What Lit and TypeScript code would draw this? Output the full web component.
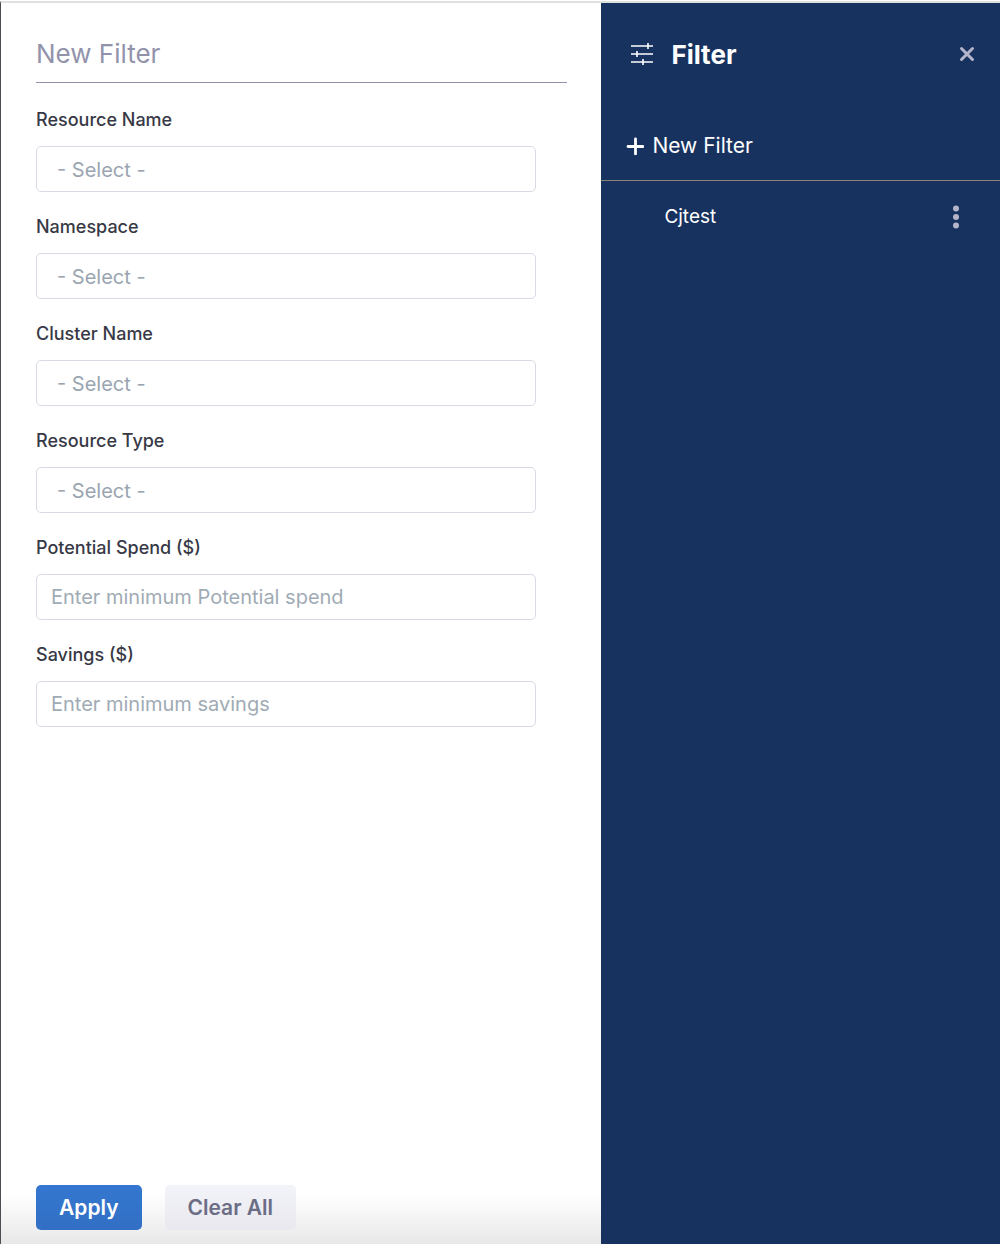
import { LitElement, html, css } from "lit";
import { customElement, state } from "lit/decorators.js";

interface Field {
  id: string;
  label: string;
  kind: "select" | "number";
  hint: string;
}

const FIELDS: Field[] = [
  { id: "resource-name", label: "Resource Name", kind: "select", hint: "- Select -" },
  { id: "namespace", label: "Namespace", kind: "select", hint: "- Select -" },
  { id: "cluster-name", label: "Cluster Name", kind: "select", hint: "- Select -" },
  { id: "resource-type", label: "Resource Type", kind: "select", hint: "- Select -" },
  { id: "potential-spend", label: "Potential Spend ($)", kind: "number", hint: "Enter minimum Potential spend" },
  { id: "savings", label: "Savings ($)", kind: "number", hint: "Enter minimum savings" },
];

@customElement("filter-form")
export class FilterForm extends LitElement {
  static styles = css`
    :host {
      display: block;
      min-width: 0;
    }
    .form {
      box-sizing: border-box;
      min-height: 100%;
      display: flex;
      flex-direction: column;
      padding: 27px 34px 14px 35px;
      background: linear-gradient(to top, #e8e8e8, #fff 50px);
    }
    input,
    select,
    button {
      box-sizing: border-box;
      margin: 0;
      font-family: inherit;
      border-radius: 5px;
    }
    .title {
      width: 100%;
      height: 53px;
      padding: 0 0 6px;
      border: 0;
      border-bottom: 1px solid #9090ae;
      border-radius: 0;
      background: none;
      color: #383946;
      font-size: 26px;
      outline: none;
    }
    .title::placeholder {
      color: #9293ab;
      opacity: 1;
    }
    .fields {
      display: grid;
      gap: 23px;
      padding: 25px 31px 25px 0;
    }
    .field {
      display: grid;
      gap: 14px;
    }
    .label {
      color: #383946;
      font-size: 18px;
      font-weight: 500;
      line-height: 24px;
    }
    .control {
      width: 100%;
      height: 46px;
      border: 1px solid #d9dae5;
      background: #fff;
      color: #9aa5b1;
      font-size: 20px;
    }
    .text {
      padding: 0 14px;
    }
    .text::placeholder {
      color: #9fabb5;
      opacity: 1;
    }
    .select {
      appearance: none;
      padding: 2px 20px 0;
    }
    .actions {
      display: flex;
      gap: 23px;
      margin-top: auto;
    }
    .button {
      height: 45px;
      padding: 0 23px;
      border: 0;
      font-size: 21px;
      font-weight: 600;
      cursor: pointer;
    }
    .apply {
      background: linear-gradient(#3477d0, #326fc4);
      color: #fff;
    }
    .clear {
      background: linear-gradient(#f3f3fa, #e9e8ef);
      color: #6b6d85;
    }
  `;

  private clear() {
    this.renderRoot.querySelector("form")?.reset();
  }

  private renderControl(f: Field) {
    return f.kind === "select"
      ? html`<select class="control select" id=${f.id}>
          <option value="">${f.hint}</option>
        </select>`
      : html`<input class="control text" id=${f.id} type="text" inputmode="decimal" placeholder=${f.hint} />`;
  }

  render() {
    return html`
      <form class="form" @submit=${(e: Event) => e.preventDefault()}>
        <input class="title" type="text" aria-label="Filter name" placeholder="New Filter" />
        <div class="fields">
          ${FIELDS.map(
            (f) => html`<div class="field">
              <label class="label" for=${f.id}>${f.label}</label>
              ${this.renderControl(f)}
            </div>`
          )}
        </div>
        <div class="actions">
          <button class="button apply" type="submit">Apply</button>
          <button class="button clear" type="button" @click=${this.clear}>Clear All</button>
        </div>
      </form>
    `;
  }
}

@customElement("filter-list")
export class FilterList extends LitElement {
  static styles = css`
    :host {
      display: block;
      min-width: 0;
      background: #18325f;
      color: #fff;
    }
    .header {
      display: flex;
      align-items: center;
      gap: 17px;
      padding: 31px 24px 0 29px;
    }
    .heading {
      flex: 1;
      margin: 0;
      padding-top: 2px;
      font-size: 26px;
      font-weight: 700;
      line-height: 38px;
    }
    svg {
      display: block;
    }
    button {
      margin: 0;
      padding: 0;
      border: 0;
      background: none;
      color: inherit;
      font-family: inherit;
      cursor: pointer;
    }
    .muted {
      color: #b4b5ca;
    }
    .add {
      display: flex;
      align-items: center;
      gap: 8px;
      box-sizing: border-box;
      width: 100%;
      padding: 57px 25px 19px;
      border-bottom: 1px solid #8a8478;
      font-size: 21px;
      line-height: 30px;
    }
    .list {
      margin: 0;
      padding: 20px 35px 0 63px;
      list-style: none;
    }
    .item {
      display: flex;
      align-items: center;
      justify-content: space-between;
    }
    .name {
      font-size: 19px;
      line-height: 32px;
    }
  `;

  @state() private filters = ["Cjtest"];

  render() {
    return html`
      <header class="header">
        <svg width="24" height="24" viewBox="0 0 24 24" fill="none" stroke="#fff" aria-hidden="true">
          <path stroke-width="1.3" d="M1 4h22M1 12h22M1 20h22" />
          <path stroke-width="1.6" d="M18 1v6M7 9v6M13 17v6" />
        </svg>
        <h2 class="heading">Filter</h2>
        <button class="muted" type="button" aria-label="Close">
          <svg width="18" height="18" viewBox="0 0 18 18" fill="none" stroke="currentColor" stroke-width="3" stroke-linecap="round">
            <path d="M3.5 3.5l11 11M14.5 3.5l-11 11" />
          </svg>
        </button>
      </header>
      <button class="add" type="button">
        <svg width="18" height="18" viewBox="0 0 18 18" fill="none" stroke="#fff" stroke-width="2.8" stroke-linecap="round" aria-hidden="true">
          <path d="M9.5 2v15M2 9.5h15" />
        </svg>
        New Filter
      </button>
      <ul class="list">
        ${this.filters.map(
          (name) => html`<li class="item">
            <button class="name" type="button">${name}</button>
            <button class="muted" type="button" aria-label="Options for ${name}">
              <svg width="18" height="24" viewBox="0 0 18 24" fill="currentColor">
                <circle cx="9" cy="3.5" r="3" />
                <circle cx="9" cy="12" r="3" />
                <circle cx="9" cy="20.5" r="3" />
              </svg>
            </button>
          </li>`
        )}
      </ul>
    `;
  }
}

@customElement("app-root")
export class AppRoot extends LitElement {
  static styles = css`
    :host {
      display: block;
      padding-top: 1px;
      font-family: Inter, "Liberation Sans", sans-serif;
    }
    .shell {
      box-sizing: border-box;
      min-height: calc(100vh - 1px);
      display: grid;
      grid-template-columns: calc(60% + 1px) 1fr;
      border-top: 2px solid #dfe0e0;
      border-left: 1px solid #4b4d53;
      background: #fff;
    }
    .form {
      display: grid;
    }
  `;

  render() {
    return html`
      <main class="shell">
        <filter-form class="form"></filter-form>
        <filter-list></filter-list>
      </main>
    `;
  }
}
